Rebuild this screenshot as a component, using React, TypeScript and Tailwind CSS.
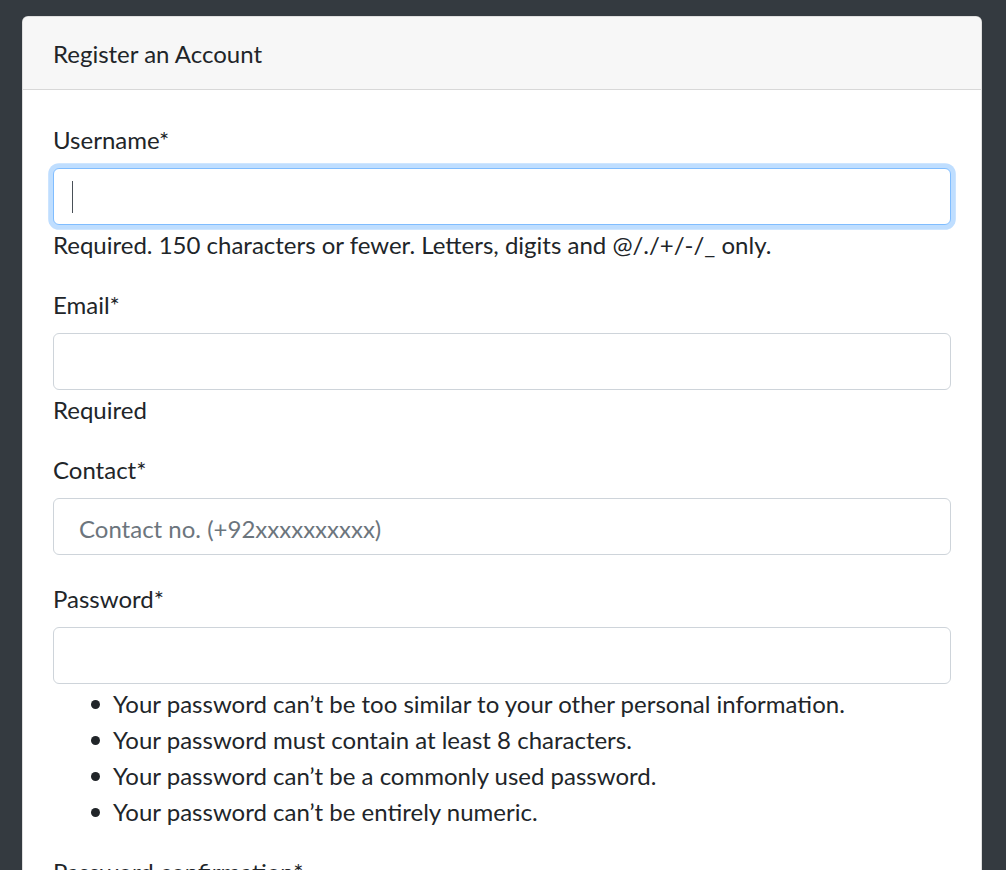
import React from "react";

const font = { fontFamily: '"Lato", "Noto Sans", sans-serif' };

function Label({ children }: { children: React.ReactNode }) {
  return (
    <label className="block mb-[12px] text-[24px] leading-[36px] text-[#212529]">
      <span className="inline-block translate-y-[2px]">{children}</span>
    </label>
  );
}

function Input({ placeholder, focused }: { placeholder?: string; focused?: boolean }) {
  return (
    <div className="relative">
      <input
        readOnly
        placeholder={placeholder}
        className={
          "block w-full h-[57px] pt-[11px] pb-[7px] pr-[18px] text-[24px] leading-[36px] text-[#495057] bg-white rounded-[6px] outline-none placeholder:text-[#6c757d] " +
          (placeholder ? "pl-[25px] " : "pl-[18px] ") +
          (focused
            ? "border border-[#80bdff] shadow-[0_0_0_4.8px_rgba(0,123,255,0.25)]"
            : "border border-[#ced4da]")
        }
        style={font}
      />
      {focused && <span className="absolute left-[19px] top-[13px] w-px h-[32px] bg-[#495057]" />}
    </div>
  );
}

function Help({ children }: { children: React.ReactNode }) {
  return (
    <div className="text-[24px] leading-[36px] text-[#212529]">
      <span className="inline-block translate-y-[2px]">{children}</span>
    </div>
  );
}

function Item({ children }: { children: React.ReactNode }) {
  return (
    <li className="relative">
      <span className="absolute left-[-22px] top-[16px] w-[9px] h-[9px] rounded-full bg-[#212529]" />
      <span className="inline-block translate-y-[2px]">{children}</span>
    </li>
  );
}

export default function App() {
  return (
    <div className="h-[870px] overflow-hidden bg-[#343a40] pt-[16px]" style={font}>
      <div className="ml-[22px] w-[960px] bg-white border border-[rgba(0,0,0,0.125)] rounded-[6px] overflow-hidden">
        <div className="bg-[#f7f7f7] border-b border-[rgba(0,0,0,0.125)] px-[30px] py-[18px] text-[24px] leading-[36px] text-[#212529]">
          <span className="inline-block translate-y-[1px]">Register an Account</span>
        </div>
        <div className="p-[30px] text-[#212529]">
          <div className="mb-[24px]">
            <Label>Username*</Label>
            <Input focused />
            <Help>Required. 150 characters or fewer. Letters, digits and @/./+/-/_ only.</Help>
          </div>
          <div className="mb-[24px]">
            <Label>Email*</Label>
            <Input />
            <Help>Required</Help>
          </div>
          <div className="mb-[24px]">
            <Label>Contact*</Label>
            <Input placeholder="Contact no. (+92xxxxxxxxxx)" />
          </div>
          <div className="mb-[24px]">
            <Label>Password*</Label>
            <Input />
            <div className="text-[24px] leading-[36px]">
              <ul className="list-none pl-[60px] mb-[24px]">
                <Item>Your password can’t be too similar to your other personal information.</Item>
                <Item>Your password must contain at least 8 characters.</Item>
                <Item>Your password can’t be a commonly used password.</Item>
                <Item>Your password can’t be entirely numeric.</Item>
              </ul>
            </div>
          </div>
          <div className="mb-[24px]">
            <Label>Password confirmation*</Label>
            <Input />
          </div>
        </div>
      </div>
    </div>
  );
}
